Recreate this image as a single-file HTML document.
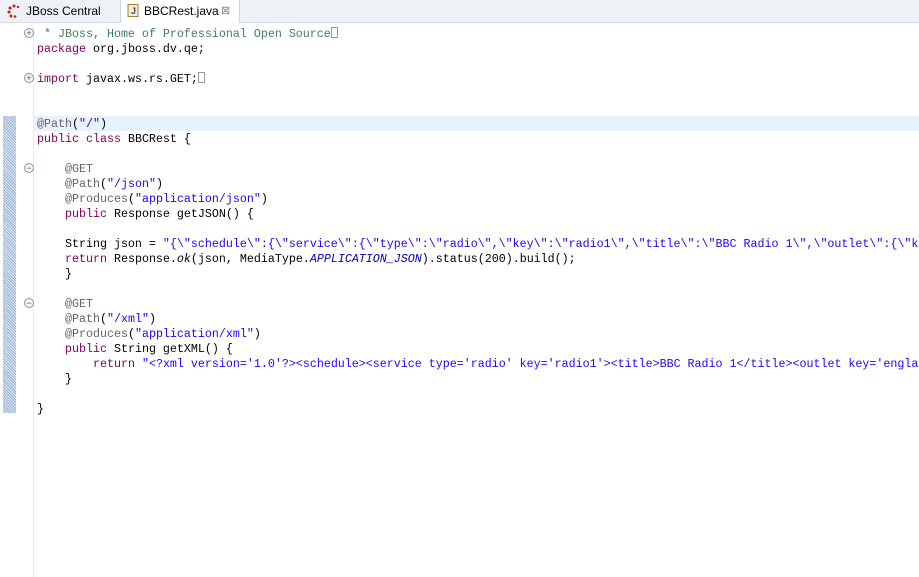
<!DOCTYPE html>
<html><head><style>
body{margin:0;width:919px;height:577px;overflow:hidden;background:#fff;font-family:"Liberation Sans",sans-serif;position:relative}
.tabs{position:absolute;left:0;top:0;width:919px;height:22px;background:#eef1f6;border-bottom:1px solid #d8dde6}
.tab{position:absolute;top:0;height:22px;font-size:12px;line-height:22px;color:#000}
.t2{left:120px;width:118px;background:#fff;border-left:1px solid #d0d4dc;border-right:1px solid #d0d4dc;height:23px}
.gut{position:absolute;left:3px;top:116px;width:13px;height:297px;background:repeating-linear-gradient(45deg,#9ab3d4 0 1px,#dfe8f4 1px 2px)}
.vl{position:absolute;left:33px;top:23px;width:1px;height:554px;background:#e8e8e8}
.hl{position:absolute;left:34px;top:116px;width:885px;height:15px;background:#e8f2fe}
pre{position:absolute;left:37px;top:27px;margin:0;font-family:"Liberation Mono",monospace;font-size:11.67px;line-height:15px;color:#000;white-space:pre}
.k{color:#7f0055}.s{color:#2a00ff}.a{color:#646464}.c{color:#3f7f5f}.i{font-style:italic}.ci{color:#0000c0;font-style:italic}
.f{position:absolute;left:24px;width:8px;height:8px;border:1px solid #8a96a8;border-radius:50%;font-size:9px;line-height:8px;text-align:center;color:#556;background:#f4f6fa;font-family:"Liberation Sans",sans-serif}
.bx{display:inline-block;width:7px;height:11px;border:1px solid #999;box-sizing:border-box;vertical-align:-1px}
</style></head><body>
<div class="tabs">
<div class="tab" style="left:4px"><svg width="14" height="14" style="position:absolute;left:3px;top:4px" viewBox="0 0 14 14"><g fill="#d41c1c"><circle cx="7" cy="2" r="1.5"/><circle cx="3" cy="4" r="1.5"/><circle cx="2" cy="8" r="1.5"/><circle cx="4" cy="12" r="1.5"/><circle cx="8" cy="12.5" r="1.3"/><circle cx="11" cy="3" r="1.2"/></g></svg><span style="position:absolute;left:22px;white-space:nowrap">JBoss Central</span></div>
<div class="tab t2"><svg width="12" height="13" style="position:absolute;left:6px;top:4px" viewBox="0 0 12 13"><rect x="1" y="0.5" width="10" height="12" fill="#f8eec8" stroke="#a08040"/><text x="4" y="10" font-size="9" font-family="Liberation Sans" fill="#3050a0" font-weight="bold">J</text></svg><span style="position:absolute;left:23px;white-space:nowrap">BBCRest.java</span><span style="position:absolute;left:100px;color:#888;font-size:11px">⊠</span></div>
</div>
<div class="gut"></div><div class="vl"></div><div class="hl"></div>
<div class="f" style="top:28px">+</div>
<div class="f" style="top:73px">+</div>
<div class="f" style="top:163px">−</div>
<div class="f" style="top:298px">−</div>
<pre><span class="c"> * JBoss, Home of Professional Open Source</span><span class="bx"></span>
<span class="k">package</span> org.jboss.dv.qe;

<span class="k">import</span> javax.ws.rs.GET;<span class="bx"></span>


<span class="a">@Path</span>(<span class="s">"/"</span>)
<span class="k">public class</span> BBCRest {

    <span class="a">@GET</span>
    <span class="a">@Path</span>(<span class="s">"/json"</span>)
    <span class="a">@Produces</span>(<span class="s">"application/json"</span>)
    <span class="k">public</span> Response getJSON() {

    String json = <span class="s">"{\"schedule\":{\"service\":{\"type\":\"radio\",\"key\":\"radio1\",\"title\":\"BBC Radio 1\",\"outlet\":{\"key\":</span>
    <span class="k">return</span> Response.<span class="i">ok</span>(json, MediaType.<span class="ci">APPLICATION_JSON</span>).status(200).build();
    }

    <span class="a">@GET</span>
    <span class="a">@Path</span>(<span class="s">"/xml"</span>)
    <span class="a">@Produces</span>(<span class="s">"application/xml"</span>)
    <span class="k">public</span> String getXML() {
        <span class="k">return</span> <span class="s">"&lt;?xml version='1.0'?&gt;&lt;schedule&gt;&lt;service type='radio' key='radio1'&gt;&lt;title&gt;BBC Radio 1&lt;/title&gt;&lt;outlet key='england'</span>
    }

}</pre>
</body></html>
